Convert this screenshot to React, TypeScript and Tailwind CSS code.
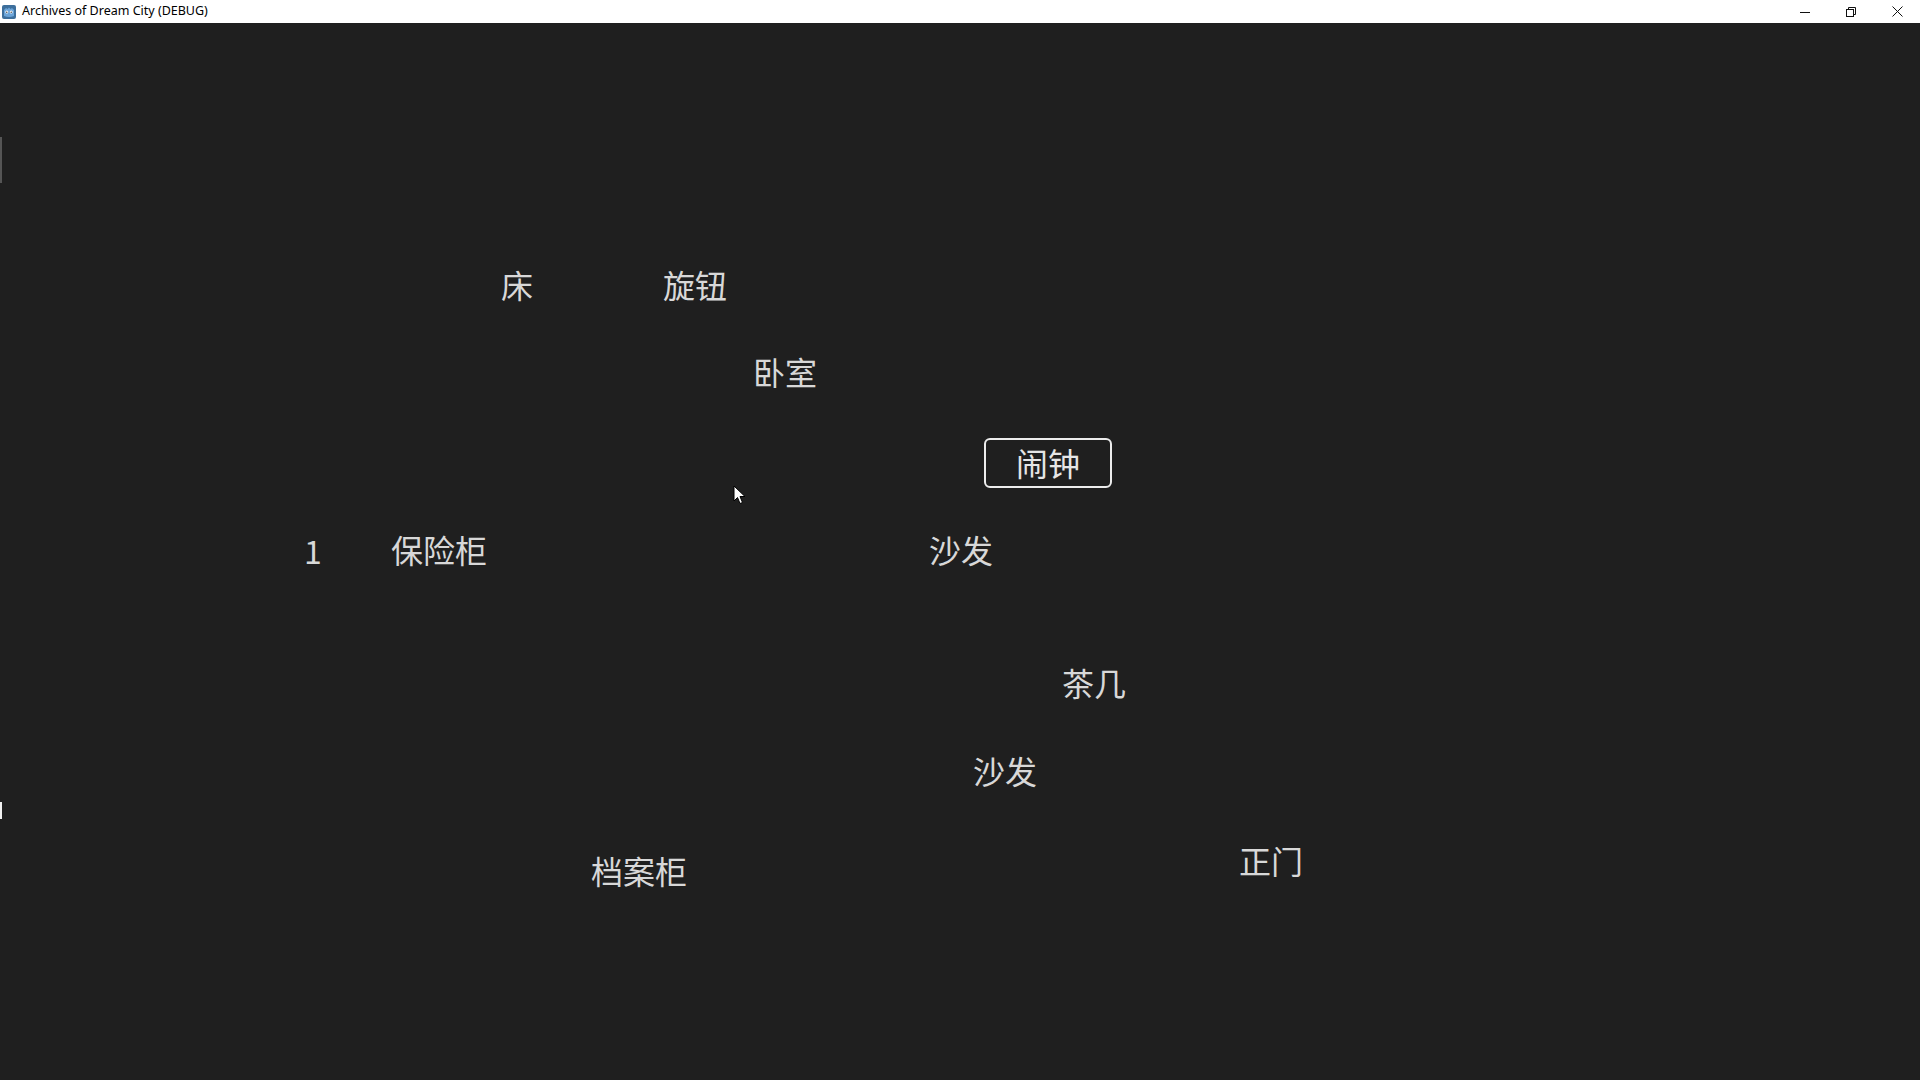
import * as React from "react";

type Label = { text: string; x: number; y: number };

// game nodes, positions taken from the scene (top-left of the text box)
const labels: Label[] = [
  { text: "床", x: 501, y: 268 },
  { text: "旋钮", x: 663, y: 268 },
  { text: "卧室", x: 753, y: 355 },
  { text: "保险柜", x: 391, y: 533 },
  { text: "沙发", x: 929, y: 533 },
  { text: "茶几", x: 1062, y: 666 },
  { text: "沙发", x: 973, y: 754 },
  { text: "正门", x: 1239, y: 844 },
  { text: "档案柜", x: 591, y: 854 },
];

const font = { fontFamily: '"Noto Sans CJK SC", "Noto Sans", sans-serif' };

function GodotIcon() {
  return (
    <svg width="14" height="14" viewBox="0 0 14 14">
      <rect x="0" y="0" width="14" height="14" rx="2" fill="#3d6f9c" />
      <path d="M2 5 L4 3 L5.5 4 L7 2.5 L8.5 4 L10 3 L12 5 L12 11 Q7 13 2 11 Z" fill="#6ba4d8" />
      <circle cx="4.8" cy="7" r="1.5" fill="#fff" />
      <circle cx="9.2" cy="7" r="1.5" fill="#fff" />
      <circle cx="4.8" cy="7.2" r="0.7" fill="#333" />
      <circle cx="9.2" cy="7.2" r="0.7" fill="#333" />
    </svg>
  );
}

function TitleBar() {
  return (
    <div className="flex h-[23px] items-center justify-between bg-white">
      <div className="flex items-center gap-[6px] pl-[2px]">
        <GodotIcon />
        <span
          className="text-[12.5px] leading-none text-black"
          style={{ fontFamily: '"Noto Sans", "Liberation Sans", sans-serif' }}
        >
          Archives of Dream City (DEBUG)
        </span>
      </div>
      <div className="flex h-full items-center">
        <div className="flex h-full w-[46px] items-center justify-center">
          <svg width="10" height="10" viewBox="0 0 10 10">
            <path d="M0 5.5 H10" stroke="#111" strokeWidth="1" />
          </svg>
        </div>
        <div className="flex h-full w-[46px] items-center justify-center">
          <svg width="10" height="10" viewBox="0 0 10 10" fill="none">
            <rect x="0.5" y="2.5" width="7" height="7" stroke="#111" />
            <path d="M2.5 2.5 V0.5 H9.5 V7.5 H7.5" stroke="#111" />
          </svg>
        </div>
        <div className="flex h-full w-[46px] items-center justify-center">
          <svg width="11" height="11" viewBox="0 0 11 11">
            <path d="M0.5 0.5 L10.5 10.5 M10.5 0.5 L0.5 10.5" stroke="#111" strokeWidth="1" />
          </svg>
        </div>
      </div>
    </div>
  );
}

function Cursor() {
  return (
    <svg width="14" height="22" viewBox="0 0 14 22" className="absolute left-[733px] top-[462px]">
      <path d="M1 1 L1 16 L4.5 12.5 L7 18.5 L9.5 17.5 L7 11.5 L12 11.5 Z" fill="#fff" stroke="#000" strokeWidth="1" />
    </svg>
  );
}

export default function App() {
  return (
    <div className="flex h-screen w-screen flex-col overflow-hidden bg-[#1f1f1f]">
      <TitleBar />
      <div className="relative flex-1 bg-[#1f1f1f]" style={font}>
        {/* edge markers */}
        <div className="absolute left-0 top-[114px] h-[46px] w-[2px] bg-[#555555]" />
        <div className="absolute left-0 top-[779px] h-[17px] w-[2px] bg-[#f0f0f0]" />

        {labels.map((l, i) => (
          <div
            key={i}
            className="absolute whitespace-nowrap text-[32px] leading-none text-[#d8d8d8]"
            style={{ left: l.x, top: l.y - 23 }}
          >
            {l.text}
          </div>
        ))}

        <div className="absolute left-[304px] top-[511px] text-[32px] leading-none text-[#d8d8d8]">1</div>

        <div className="absolute left-[984px] top-[415px] flex h-[50px] w-[128px] items-center justify-center rounded-[6px] border-2 border-[#ececec] pb-[3px] text-[32px] leading-none text-[#e6e6e6]">
          闹钟
        </div>

        <Cursor />
      </div>
    </div>
  );
}
